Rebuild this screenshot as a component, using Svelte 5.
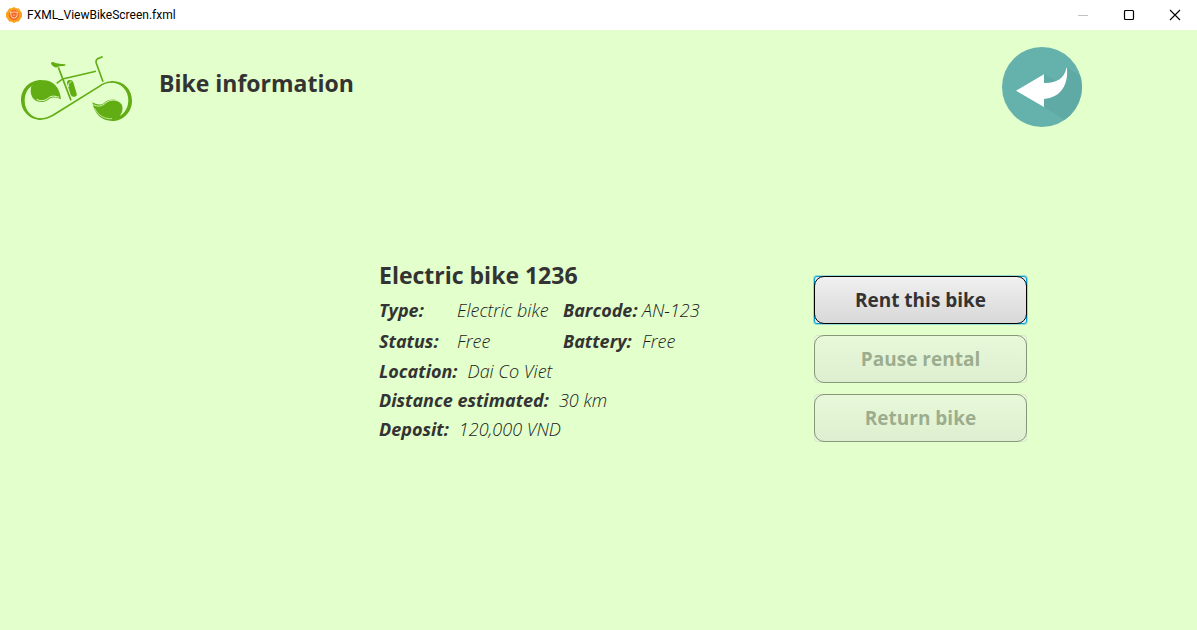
<script>
  const title = 'FXML_ViewBikeScreen.fxml';
  const bike = {
    name: 'Electric bike 1236',
    type: 'Electric bike',
    barcode: 'AN-123',
    status: 'Free',
    battery: 'Free',
    location: 'Dai Co Viet',
    distance: '30 km',
    deposit: '120,000 VND'
  };
</script>

<div class="window">
  <div class="titlebar">
    <svg class="app-icon" viewBox="0 0 16 16" aria-hidden="true">
      <path d="M8 0l2.3 1.2 2.7.3 1.3 2.3L16 6v4l-1.8 2.2-1.3 2.3-2.7.3L8 16l-2.3-1.2-2.6-.3-1.3-2.3L0 10V6l1.8-2.2 1.3-2.3 2.6-.3z" fill="#fba31c" />
      <circle cx="8" cy="8" r="5.2" fill="#f4702a" />
      <path d="M4.300 4.800L6.500 5.600Q8 4.300 9.500 5.400L11.600 5Q10.900 6.500 11.200 8Q11 10.800 8 11Q5 10.800 5 8Q5 6 4.300 4.800Z" fill="#f4581f" stroke="#ffd9a8" stroke-width="1" />
      <path d="M6.500 7l3 2M9.500 7l-3 2" stroke="#ffc58a" stroke-width=".6" />
    </svg>
    <span class="caption">{title}</span>
    <button class="win" disabled aria-label="Minimize"><svg viewBox="0 0 12 12"><path d="M1 6.500h10" stroke="#c2c2c2" /></svg></button>
    <button class="win" aria-label="Maximize"><svg viewBox="0 0 12 12"><rect x="1.500" y="1.500" width="9" height="9" rx="1" fill="none" stroke="#000" stroke-width="1.200" /></svg></button>
    <button class="win" aria-label="Close"><svg viewBox="0 0 12 12"><path d="M1 1l10 10M11 1L1 11" stroke="#000" stroke-width="1.100" /></svg></button>
  </div>

  <header>
    <svg class="logo" viewBox="30 30 339 198" role="img" aria-label="Bike logo">
      <g fill="none" stroke="#62ad14" stroke-linecap="butt">
        <path d="M145 64L183 163" stroke-width="5" />
        <path d="M140 112L158 99L258 76" stroke-width="4.500" />
        <path d="M278 32L263 38Q256 43 259 52L279 107" stroke-width="5" />
        <path d="M92 219C108 219 116 215 130 207L268 121C280 112 290 108 305 108" stroke-width="5" />
      </g>
      <g fill="#62ad14">
        <path d="M123 53Q122 47 130 48Q140 54 166 55Q168 60 160 60Q150 59 141 64Q132 66 123 53Z" />
        <path d="M171 112Q170 103 178 102Q187 101 190 109L200 143Q202 151 193 152Q185 154 182 146Z" />
        <path d="M100 102C59 99 33 129 33 162C33 196 60 222 94 222L94 217C66 217 44 194 44 164C44 144 52 130 64 121Z" />
        <path d="M64 121C76 107 92 101 105 103C128 105 149 122 153 160C139 154 127 152 115 161C101 171 82 170 72 160C62 150 60 134 64 121Z" />
        <path d="M303 105C340 103 366 129 366 164C366 199 339 225 306 225C277 225 253 206 247 169C257 174 270 181 283 170C300 155 324 159 334 174C341 187 337 200 329 210C345 201 355 184 355 162C355 132 333 110 303 110Z" />
      </g>
      <g fill="none" stroke="#e3ffcc" stroke-width="2.500">
        <path d="M176 123Q173 110 184 107" />
        <path d="M80 160C93 167 106 164 115 156C125 148 137 150 147 154" stroke-width="3" />
        <path d="M250 176C264 183 275 182 288 170C303 158 323 161 332 171" />
        <path d="M254 187C265 211 286 219 306 218" stroke-width="2" />
      </g>
    </svg>
    <h1>Bike information</h1>
    <button class="back" aria-label="Back">
      <svg viewBox="36 33 240 240" aria-hidden="true">
        <defs><clipPath id="disc"><circle cx="156" cy="153" r="120" /></clipPath></defs>
        <circle cx="156" cy="153" r="120" fill="#65b2ac" />
        <path d="M162 115L202 135L231 96L300 134V298L161 213Z" fill="#60aaa5" clip-path="url(#disc)" />
        <path d="M78 164L162 115V141C201 142 223 126 229 96H231C235 150 211 184 162 189V213Z" fill="#fff" />
      </svg>
    </button>
  </header>

  <main>
    <section class="details">
      <h2>{bike.name}</h2>
      <dl class="pairs">
        <dt>Type:</dt><dd>{bike.type}</dd>
        <dt>Barcode:</dt><dd>{bike.barcode}</dd>
        <dt>Status:</dt><dd>{bike.status}</dd>
        <dt>Battery:</dt><dd>{bike.battery}</dd>
      </dl>
      <dl class="lines">
        <div><dt>Location:</dt><dd>{bike.location}</dd></div>
        <div><dt>Distance estimated:</dt><dd>{bike.distance}</dd></div>
        <div><dt>Deposit:</dt><dd>{bike.deposit}</dd></div>
      </dl>
    </section>
    <div class="actions">
      <button class="action focused">Rent this bike</button>
      <button class="action" disabled>Pause rental</button>
      <button class="action" disabled>Return bike</button>
    </div>
  </main>
</div>

<style>
  :global(body) { background: #e3ffcc; }
  .window {
    min-height: 100vh;
    box-sizing: border-box;
    background: #e3ffcc;
    color: #333;
    font-family: "Open Sans", "Noto Sans", sans-serif;
  }
  button { font-family: inherit; padding: 0; cursor: pointer; }
  button:disabled { cursor: default; }
  h1, h2, dl, dd { margin: 0; }

  .titlebar {
    display: flex;
    align-items: center;
    height: 30px;
    padding-left: 6px;
    background: #fff;
    color: #000;
  }
  .app-icon { width: 16px; height: 16px; margin-right: 5px; }
  .caption { flex: 1; font-size: 12px; line-height: 28px; font-family: Roboto, sans-serif; }
  .win {
    display: grid;
    place-items: center;
    width: 46px;
    height: 28px;
    border: 0;
    background: none;
  }
  .win:last-child { width: 45px; }
  .win svg { width: 12px; height: 12px; }

  header {
    display: flex;
    align-items: flex-start;
    padding: 17px 115px 0 20px;
  }
  .logo { width: 113px; height: 66px; margin-top: 9px; }
  h1, h2 { font-size: 23px; font-weight: 700; line-height: 34px; }
  h1 { flex: 1; margin: 19px 0 0 26px; }
  .back {
    width: 80px;
    height: 80px;
    border: 0;
    border-radius: 50%;
    background: none;
  }
  .back svg { display: block; width: 100%; height: 100%; }

  main {
    display: grid;
    grid-template-columns: 379fr 435fr 213px 170fr;
    align-items: start;
    padding-top: 131px;
  }
  .details { grid-column: 2; white-space: nowrap; }
  dl { font-size: 18px; font-style: italic; }
  dt { font-weight: 700; }
  dd { font-weight: 300; color: #1c1c1c; }
  .pairs {
    display: grid;
    grid-template-columns: 78px 106px 79px auto;
    justify-content: start;
    line-height: 31px;
    margin-top: 3px;
  }
  .lines { line-height: 29px; }
  .lines div { display: flex; gap: 10px; }

  .actions {
    grid-column: 3;
    display: grid;
    gap: 11px;
    padding-top: 18px;
  }
  .action {
    position: relative;
    isolation: isolate;
    height: 48px;
    border: 1px solid #c8c8c8;
    border-radius: 3px;
    background: #eee;
    color: #333;
    font-size: 19px;
    font-weight: 700;
  }
  .action::before {
    content: "";
    position: absolute;
    inset: -1px;
    z-index: -1;
    border: 1px solid #000;
    border-radius: 10px;
    background: linear-gradient(#f0f0f0, #d8d8d8);
  }
  .action:disabled { opacity: 0.4; }
  .action.focused {
    border-color: #039ed3;
    box-shadow: 0 0 0 1px rgba(3, 158, 211, 0.35);
  }
</style>
